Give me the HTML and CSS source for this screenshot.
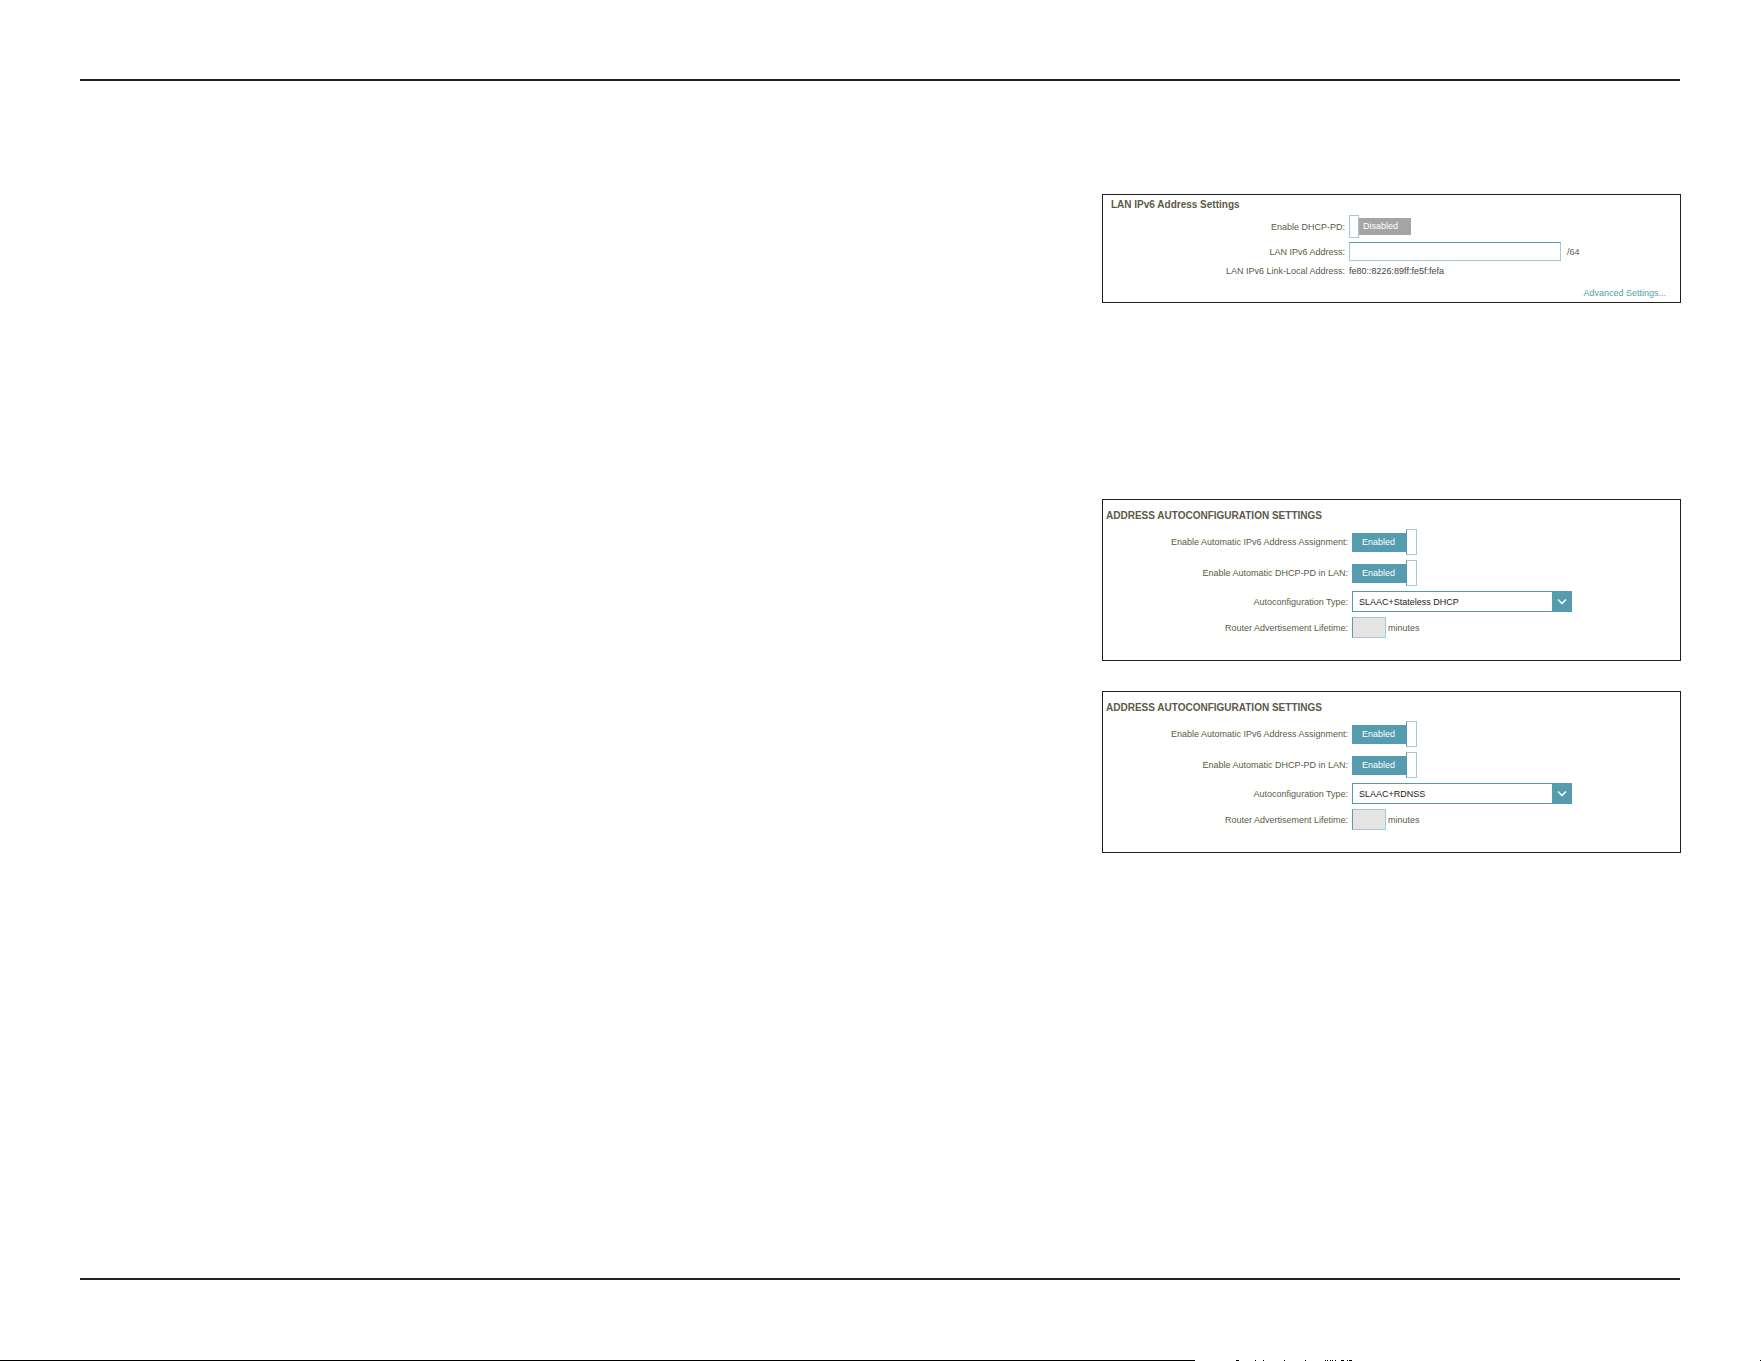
FILE: index.html
```html
<!DOCTYPE html>
<html lang="en">
<head>
    <meta charset="UTF-8">
    <meta name="viewport" content="width=device-width, initial-scale=1.0">
    <title>IPv6 Settings</title>
    <link rel="stylesheet" href="styles.css">
</head>
<body>
    <main>
        <section class="panel lan">
            <h2>LAN IPv6 Address Settings</h2>
            <div class="row">
                <label for="lan-pd">Enable DHCP-PD:</label>
                <div class="toggle"><input type="checkbox" id="lan-pd"><span>Disabled</span></div>
            </div>
            <div class="row">
                <label for="lan-address">LAN IPv6 Address:</label>
                <div class="field"><input type="text" id="lan-address" class="address"><span class="prefix">/64</span></div>
            </div>
            <div class="row">
                <span class="name">LAN IPv6 Link-Local Address:</span>
                <span class="value">fe80::8226:89ff:fe5f:fefa</span>
            </div>
            <a href="#" class="advanced">Advanced Settings...</a>
        </section>

        <section class="panel auto">
            <h2>ADDRESS AUTOCONFIGURATION SETTINGS</h2>
            <div class="row">
                <label for="assign-1">Enable Automatic IPv6 Address Assignment:</label>
                <div class="toggle"><input type="checkbox" id="assign-1" checked><span>Enabled</span></div>
            </div>
            <div class="row">
                <label for="pd-1">Enable Automatic DHCP-PD in LAN:</label>
                <div class="toggle"><input type="checkbox" id="pd-1" checked><span>Enabled</span></div>
            </div>
            <div class="row">
                <label for="type-1">Autoconfiguration Type:</label>
                <div class="select">
                    <select id="type-1">
                        <option selected>SLAAC+Stateless DHCP</option>
                        <option>SLAAC+RDNSS</option>
                    </select>
                    <svg viewBox="0 0 20 21"><path d="M6 8.5l4 4 4-4"/></svg>
                </div>
            </div>
            <div class="row">
                <label for="life-1">Router Advertisement Lifetime:</label>
                <div class="field"><input type="text" id="life-1" class="minutes" disabled><span>minutes</span></div>
            </div>
        </section>

        <section class="panel auto">
            <h2>ADDRESS AUTOCONFIGURATION SETTINGS</h2>
            <div class="row">
                <label for="assign-2">Enable Automatic IPv6 Address Assignment:</label>
                <div class="toggle"><input type="checkbox" id="assign-2" checked><span>Enabled</span></div>
            </div>
            <div class="row">
                <label for="pd-2">Enable Automatic DHCP-PD in LAN:</label>
                <div class="toggle"><input type="checkbox" id="pd-2" checked><span>Enabled</span></div>
            </div>
            <div class="row">
                <label for="type-2">Autoconfiguration Type:</label>
                <div class="select">
                    <select id="type-2">
                        <option>SLAAC+Stateless DHCP</option>
                        <option selected>SLAAC+RDNSS</option>
                    </select>
                    <svg viewBox="0 0 20 21"><path d="M6 8.5l4 4 4-4"/></svg>
                </div>
            </div>
            <div class="row">
                <label for="life-2">Router Advertisement Lifetime:</label>
                <div class="field"><input type="text" id="life-2" class="minutes" disabled><span>minutes</span></div>
            </div>
        </section>
    </main>
    <footer>
        <div class="edge"></div>
        <svg class="marks" width="200" height="1" viewBox="0 0 200 1">
            <path d="M41 .5h3M60 .5h1M68 .5h1M89 .5h1M110 .5h1M130 .5h1M132 .5h1M135 .5h1M137 .5h1M140 .5h1M146 .5h3M152 .5h1M154 .5h3"/>
        </svg>
        <div class="corner"></div>
    </footer>
</body>
</html>
```
FILE: styles.css
```css
:root {
  --teal: #559cae;
  --teal-light: #a3c9d3;
  --ink: #231f20;
  --text: #5c5a47;
}
* {
  box-sizing: border-box;
}
body {
  margin: 0;
  min-height: 100vh;
  display: flex;
  flex-direction: column;
  background: #fff;
  color: var(--text);
  font: 9px/12px "Liberation Sans", Arial, sans-serif;
}
/* Page body between the two rules */
main {
  flex: 1;
  display: flex;
  flex-direction: column;
  align-items: flex-end;
  margin: 79px 81px 80px 80px;
  padding-top: 113px;
  border-top: 2px solid var(--ink);
  border-bottom: 2px solid var(--ink);
}
.panel {
  display: flex;
  flex-direction: column;
  width: 579px;
  max-width: 100%;
  margin: 0 -1px 30px 0;
  border: 1px solid var(--ink);
}
h2 {
  margin: 0;
  font-size: 10px;
  line-height: 12px;
}
.row {
  display: flex;
  align-items: center;
  gap: 4px;
}
.row label, .name {
  text-align: right;
}
.field {
  display: flex;
  align-items: center;
  gap: 2px;
}
input, select {
  margin: 0;
  font: inherit;
  border: 1px solid var(--teal-light);
  border-radius: 0;
  background: #fff;
}

/* LAN settings */
.lan {
  gap: 4px;
  padding: 4px 14px 3px 8px;
  margin-bottom: 196px;
}
.lan .row label, .lan .name {
  width: 234px;
}
.address {
  width: 212px;
  height: 19px;
  border-top-color: var(--teal);
}
.prefix {
  margin-left: 4px;
}
.value {
  color: #444;
}
.advanced {
  align-self: flex-end;
  margin-top: auto;
  padding-top: 6px;
  color: var(--teal);
  text-decoration: none;
}

/* Autoconfiguration */
.auto {
  gap: 5px;
  padding: 10px 3px 22px;
}
.auto h2 {
  margin-bottom: 2px;
}
.auto .row label {
  width: 242px;
}
.minutes {
  width: 34px;
  height: 21px;
  border-left-color: var(--teal);
}
.minutes:disabled {
  background: #e6e4e3;
}

/* Switch: the checkbox is the knob, the text is the bar */
.toggle {
  display: flex;
  align-items: center;
}
.toggle input {
  appearance: none;
  width: 10px;
  height: 23px;
  cursor: pointer;
}
.toggle span {
  width: 52px;
  height: 17px;
  padding-left: 4px;
  background: #a5a5a5;
  color: #fff;
  line-height: 17px;
}
.toggle input:checked {
  order: 1;
  width: 11px;
  height: 26px;
  border-left-color: var(--teal);
}
.toggle input:checked + span {
  width: 54px;
  height: 19px;
  padding-left: 10px;
  background: var(--teal);
  line-height: 19px;
}

.select {
  position: relative;
  width: 220px;
  height: 21px;
}
.select select {
  appearance: none;
  display: block;
  width: 100%;
  height: 100%;
  padding: 0 24px 0 6px;
  border-color: var(--teal);
  color: #222;
}
.select svg {
  position: absolute;
  top: 0;
  right: 0;
  width: 20px;
  height: 21px;
  background: var(--teal);
  fill: none;
  stroke: #fff;
  stroke-width: 1.5;
  pointer-events: none;
}

footer {
  display: flex;
  align-items: flex-end;
  height: 1px;
}
.edge {
  width: 1195px;
  height: 1px;
  background: #000;
}
.marks {
  stroke: #000;
}
.corner {
  width: 1px;
  height: 1px;
  margin-left: auto;
  background: #000;
}
```
